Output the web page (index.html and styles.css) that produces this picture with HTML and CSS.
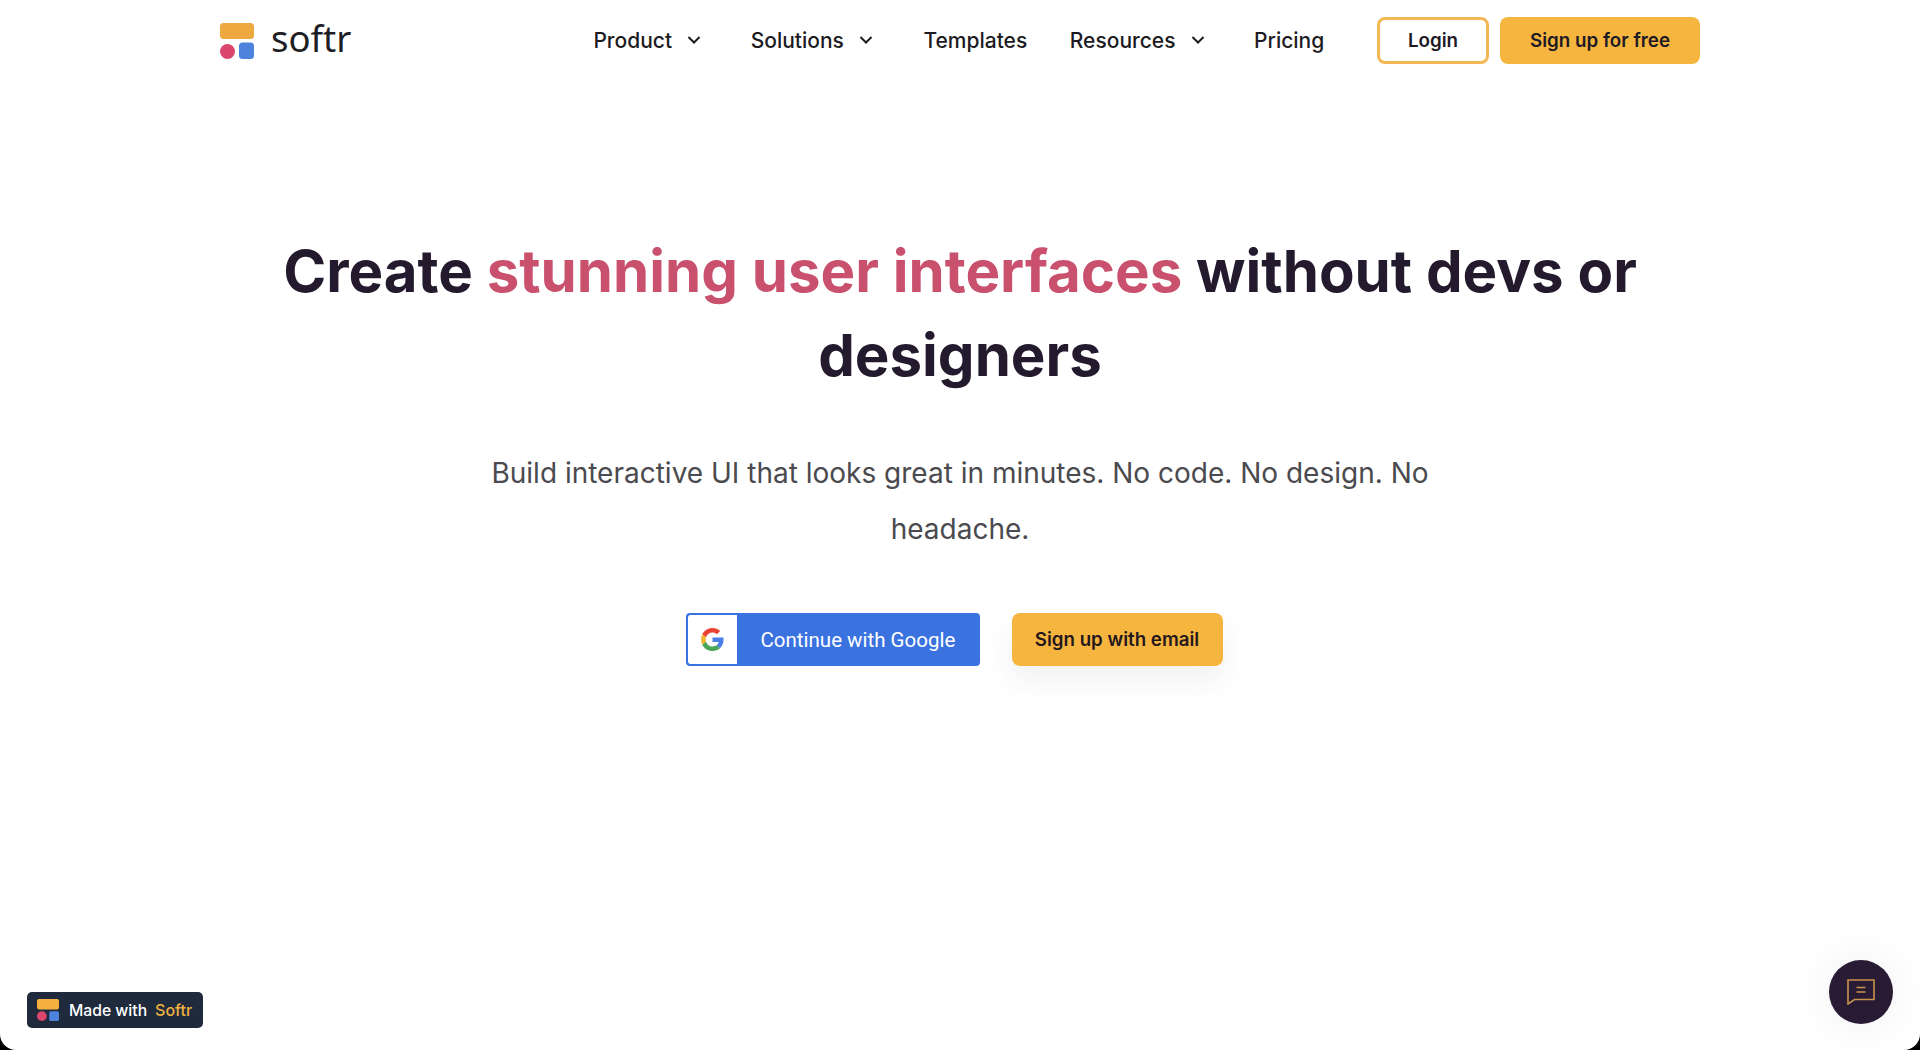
FILE: index.html
```html
<!DOCTYPE html>
<html lang="en">
<head>
<meta charset="utf-8">
<title>Softr</title>
<link rel="stylesheet" href="styles.css">
</head>
<body>
<header class="nav">
  <a class="brand">
    <svg class="brand-mark" viewBox="0 0 34 36" aria-hidden="true">
      <rect x="0" y="0" width="34" height="16" rx="3.500" fill="#eda83f"/>
      <circle cx="7.500" cy="28.500" r="7.500" fill="#dc466d"/>
      <rect x="19" y="19.500" width="15" height="16.500" rx="3.500" fill="#4d83dc"/>
    </svg>
    <span class="brand-name">softr</span>
  </a>
  <nav class="nav-links">
    <a class="nav-link nav-product">Product<svg class="chev" viewBox="0 0 14 10"><path d="M1.500 2 7 7.500 12.500 2"/></svg></a>
    <a class="nav-link nav-solutions">Solutions<svg class="chev" viewBox="0 0 14 10"><path d="M1.500 2 7 7.500 12.500 2"/></svg></a>
    <a class="nav-link nav-templates">Templates</a>
    <a class="nav-link nav-resources">Resources<svg class="chev" viewBox="0 0 14 10"><path d="M1.500 2 7 7.500 12.500 2"/></svg></a>
    <a class="nav-link nav-pricing">Pricing</a>
  </nav>
  <div class="nav-actions">
    <a class="btn btn-outline">Login</a>
    <a class="btn btn-solid">Sign up for free</a>
  </div>
</header>
<main class="hero">
  <h1 class="hero-title">Create <span class="accent">stunning user interfaces</span> without devs or designers</h1>
  <p class="hero-sub">Build interactive UI that looks great in minutes. No code. No design. No headache.</p>
  <div class="hero-actions">
    <a class="google">
      <span class="google-icon">
        <svg viewBox="0 0 48 48" width="23" height="23" aria-hidden="true">
          <path fill="#ea4335" d="M24 9.500c3.500 0 6.700 1.200 9.200 3.600l6.900-6.900C35.900 2.400 30.500 0 24 0 14.600 0 6.500 5.400 2.600 13.200l8 6.200C12.500 13.600 17.800 9.500 24 9.500z"/>
          <path fill="#4a7fe8" d="M47 24.500c0-1.600-.1-3.100-.4-4.500H24v9h12.900c-.6 3-2.200 5.500-4.800 7.200l7.700 6c4.500-4.200 7.200-10.300 7.200-17.700z"/>
          <path fill="#f2b632" d="M10.600 28.600c-.5-1.500-.8-3-.8-4.600s.3-3.100.8-4.600l-8-6.200C.9 16.500 0 20.100 0 24s.9 7.500 2.600 10.800z"/>
          <path fill="#4aa658" d="M24 48c6.500 0 11.900-2.100 15.800-5.800l-7.700-6c-2.100 1.400-4.900 2.300-8.100 2.300-6.200 0-11.500-4.100-13.400-9.900l-8 6.200C6.500 42.600 14.600 48 24 48z"/>
        </svg>
      </span>
      <span class="google-label">Continue with Google</span>
    </a>
    <a class="btn-email">Sign up with email</a>
  </div>
</main>
<a class="made-with">
  <svg class="made-mark" viewBox="0 0 36 36" aria-hidden="true">
    <rect x="0" y="0" width="36" height="17" rx="3" fill="#f4b13f"/>
    <circle cx="8" cy="28" r="8" fill="#dc466d"/>
    <rect x="20" y="20" width="16" height="16" rx="3" fill="#4d83dc"/>
  </svg>
  <span class="made-text">Made with</span><span class="made-brand">Softr</span>
</a>
<button class="chat" aria-label="Chat">
  <svg viewBox="0 0 28 26" width="28" height="26" aria-hidden="true">
    <path class="chat-outline" d="M1 1h26v19.500H7.500L1 25z"/>
    <path class="chat-outline" d="M9.500 8.500h9M9.500 13h9"/>
  </svg>
</button>
<span class="corner corner-left"></span>
<span class="corner corner-right"></span>
</body>
</html>
```
FILE: styles.css
```css
* { box-sizing: border-box; }
html, body { margin: 0; height: 100%; }
body {
  position: relative;
  height: 1050px;
  overflow: hidden;
  background: #fff;
  color: #241a2e;
  font-family: Inter, "Liberation Sans", sans-serif;
}
a { text-decoration: none; color: inherit; }

.nav {
  display: flex;
  align-items: center;
  height: 80px;
  padding: 0 220px;
}
.brand { display: flex; align-items: center; gap: 17px; }
.brand-mark { width: 34px; height: 36px; display: block; margin-top: 2px; }
.brand-name {
  font-family: "Noto Sans", Inter, sans-serif;
  font-size: 36.500px;
  line-height: 40px;
  color: #1f1d24;
  margin-top: -4px;
}
.nav-links { display: flex; align-items: center; margin-left: 242px; }
.nav-link {
  display: flex;
  align-items: center;
  font-size: 21px;
  font-weight: 500;
  color: #1d1b22;
  white-space: nowrap;
}
.chev { width: 14px; height: 10px; margin-left: 15px; fill: none; stroke: #1d1b22; stroke-width: 2; }
.nav-product { margin-right: 49.500px; }
.nav-solutions { margin-right: 50.500px; }
.nav-templates { margin-right: 42.500px; }
.nav-resources { margin-right: 49.500px; }
.nav-actions { display: flex; gap: 11px; margin-left: auto; }
.btn {
  display: flex;
  align-items: center;
  justify-content: center;
  height: 47px;
  border-radius: 8px;
  font-size: 18.800px;
  font-weight: 600;
  color: #1d1a26;
}
.btn-outline { width: 112px; border: 3px solid #f4b755; background: #fff; }
.btn-solid { width: 200px; background: #f6b53f; }

.hero {
  display: flex;
  flex-direction: column;
  align-items: center;
  padding-top: 149px;
  text-align: center;
}
.hero-title {
  width: 1400px;
  margin: 0;
  font-size: 58.200px;
  line-height: 84px;
  font-weight: 700;
  color: #241a2e;
}
.accent { color: #c9516e; }
.hero-sub {
  width: 1000px;
  margin: 48px 0 0;
  font-size: 28px;
  line-height: 56px;
  color: #4a4a4f;
}
.hero-actions { display: flex; gap: 32px; margin-top: 56px; margin-right: 12px; }
.google {
  display: flex;
  align-items: center;
  width: 294px;
  height: 53px;
  border: 2px solid #3a72e0;
  border-radius: 4px;
  background: #3a72e0;
  overflow: hidden;
}
.google-icon {
  display: flex;
  align-items: center;
  justify-content: center;
  width: 49px;
  height: 100%;
  background: #fff;
  border-radius: 2px 0 0 2px;
}
.google-label {
  margin-left: 24px;
  font-family: Roboto, "Open Sans", sans-serif;
  font-size: 20.500px;
  font-weight: 400;
  color: #fff;
  white-space: nowrap;
}
.btn-email {
  display: flex;
  align-items: center;
  justify-content: center;
  width: 211px;
  height: 53px;
  border-radius: 8px;
  background: #f6b53f;
  font-size: 18.700px;
  font-weight: 600;
  color: #24181e;
  box-shadow: 0 14px 28px rgba(60, 50, 70, 0.07);
}

.made-with {
  position: absolute;
  left: 27px;
  bottom: 22px;
  display: flex;
  align-items: center;
  height: 36px;
  padding: 0 11px 0 10px;
  border-radius: 5px;
  background: #1f2a3d;
  font-size: 15.700px;
  font-weight: 500;
  color: #fff;
}
.made-mark { width: 22px; height: 22px; margin-right: 10px; }
.made-brand { margin-left: 8px; font-size: 16px; color: #f0b23f; }
.chat {
  position: absolute;
  right: 27px;
  bottom: 26px;
  display: flex;
  align-items: center;
  justify-content: center;
  width: 64px;
  height: 64px;
  padding: 0;
  border: 0;
  border-radius: 50%;
  background: #2a1b35;
  box-shadow: 0 0 40px rgba(60, 50, 70, 0.08);
}
.chat-outline { fill: none; stroke: #c8934a; stroke-width: 1.600; }

.corner {
  position: absolute;
  bottom: 0;
  width: 16px;
  height: 16px;
  background: #000;
}
.corner-left { left: 0; clip-path: path("M0 0A16 16 0 0 0 16 16H0Z"); }
.corner-right { right: 0; clip-path: path("M16 0A16 16 0 0 1 0 16H16Z"); }
```
